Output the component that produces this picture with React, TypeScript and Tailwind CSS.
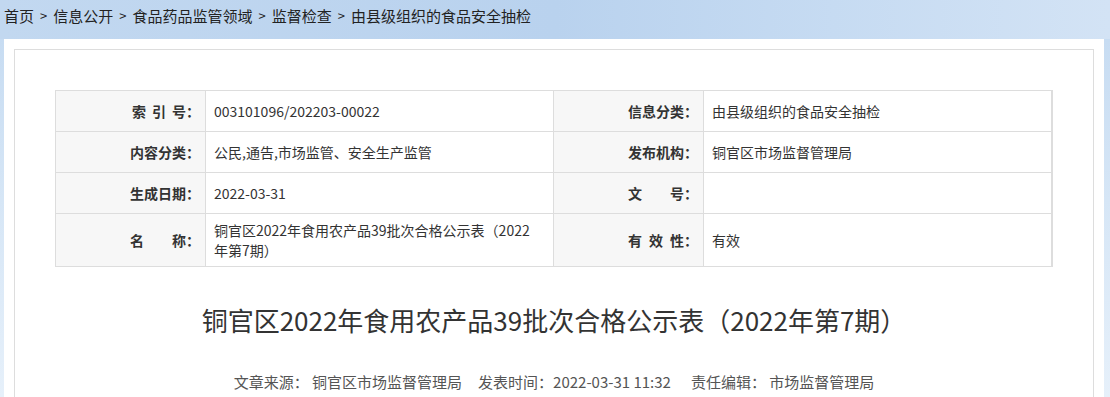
import React from "react";

const FONT = { fontFamily: '"Microsoft YaHei", "Noto Sans CJK SC", "Noto Sans", sans-serif' };

function Sep() {
  return <span className="mx-[6px] text-[13px]">&gt;</span>;
}

function Label({ children }: { children: React.ReactNode }) {
  return (
    <div className="flex min-h-[40px] items-center justify-end whitespace-pre bg-[#f7f7f7] py-[6px] pr-[5px] text-[14px] font-bold leading-[20px] text-[#333]">
      {children}
    </div>
  );
}

function Spaced({ chars, gap }: { chars: string[]; gap: string }) {
  return (
    <span className={`flex ${gap}`}>
      {chars.map((c, i) => (
        <span key={i}>{c}</span>
      ))}
    </span>
  );
}

function Value({ children }: { children?: React.ReactNode }) {
  return (
    <div className="flex min-h-[40px] items-center bg-white py-[6px] pl-[8px] pr-[10px] text-[14px] leading-[20px] text-[#333]">
      <div>{children}</div>
    </div>
  );
}

export default function App() {
  return (
    <div
      style={FONT}
      className="min-h-[397px] w-[1110px] overflow-hidden bg-[linear-gradient(180deg,#c3d8f0_0px,#c7dcf2_40px,#d6e6f6_200px,#e6f0fa_397px)]"
    >
      <div className="flex h-[39px] items-start bg-[linear-gradient(90deg,#c2d8f0_0%,#b9d2ee_50%,#c6dbf2_75%,#d3e3f5_100%)] pl-[4px] pt-[4px] text-[15px] leading-[24px] text-[#222]">
        <span>首页</span>
        <Sep />
        <span>信息公开</span>
        <Sep />
        <span>食品药品监管领域</span>
        <Sep />
        <span>监督检查</span>
        <Sep />
        <span>由县级组织的食品安全抽检</span>
      </div>
      <div className="ml-[4px] mr-[6px] h-[358px] bg-white px-[10px] pt-[10px]">
        <div className="h-[400px] border border-[#ddd] px-[40px] pt-[40px]">
          <div className="grid grid-cols-[149px_347px_149px_347px] gap-px border border-[#ddd] bg-[#ddd]">
            <Label>
              <Spaced chars={["索", "引", "号"]} gap="gap-[6px]" />
              <span>：</span>
            </Label>
            <Value>003101096/202203-00022</Value>
            <Label>信息分类：</Label>
            <Value>由县级组织的食品安全抽检</Value>

            <Label>内容分类：</Label>
            <Value>公民,通告,市场监管、安全生产监管</Value>
            <Label>发布机构：</Label>
            <Value>铜官区市场监督管理局</Value>

            <Label>生成日期：</Label>
            <Value>2022-03-31</Value>
            <Label>{"文　　号："}</Label>
            <Value />

            <Label>{"名　　称："}</Label>
            <Value>
              铜官区2022年食用农产品39批次合格公示表（2022
              <br />
              年第7期）
            </Value>
            <Label>
              <Spaced chars={["有", "效", "性"]} gap="gap-[7px]" />
              <span>：</span>
            </Label>
            <Value>有效</Value>
          </div>
          <h1 className="mt-[35px] text-center text-[26px] font-normal leading-[36px] text-[#333]">
            铜官区2022年食用农产品39批次合格公示表（2022年第7期）
          </h1>
          <div className="mt-[34px] text-center text-[15px] leading-[20px] text-[#555]">
            <span>文章来源： 铜官区市场监督管理局</span>
            <span className="ml-[16px]">发表时间：2022-03-31 11:32</span>
            <span className="ml-[20px]">责任编辑： 市场监督管理局</span>
          </div>
        </div>
      </div>
    </div>
  );
}
